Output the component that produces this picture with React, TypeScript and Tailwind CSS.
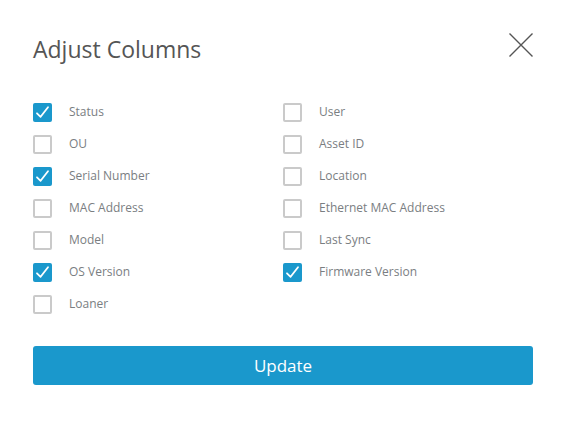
import React, { useState } from "react";

type Col = { label: string; checked: boolean };

const left: Col[] = [
  { label: "Status", checked: true },
  { label: "OU", checked: false },
  { label: "Serial Number", checked: true },
  { label: "MAC Address", checked: false },
  { label: "Model", checked: false },
  { label: "OS Version", checked: true },
  { label: "Loaner", checked: false },
];

const right: Col[] = [
  { label: "User", checked: false },
  { label: "Asset ID", checked: false },
  { label: "Location", checked: false },
  { label: "Ethernet MAC Address", checked: false },
  { label: "Last Sync", checked: false },
  { label: "Firmware Version", checked: true },
];

function Box({ checked }: { checked: boolean }) {
  if (checked) {
    return (
      <span className="flex h-[19px] w-[19px] items-center justify-center rounded-[2px] bg-[#1a98cc]">
        <svg width="15" height="15" viewBox="0 0 15 15" fill="none">
          <path d="M2 8.3 L5.6 11.8 L13 2.2" stroke="#fff" strokeWidth="1.8" strokeLinecap="round" strokeLinejoin="round" />
        </svg>
      </span>
    );
  }
  return <span className="block h-[19px] w-[19px] rounded-[2px] border-2 border-[#cacaca] bg-white" />;
}

function Row({ col }: { col: Col }) {
  const [on, setOn] = useState(col.checked);
  return (
    <label className="flex h-8 cursor-pointer items-center" onClick={() => setOn(!on)}>
      <span className="w-9">
        <Box checked={on} />
      </span>
      <span className="text-[12px] text-[#7a7e82]">{col.label}</span>
    </label>
  );
}

export default function App() {
  return (
    <div
      className="h-[448px] w-[566px] bg-white px-[33px] pt-[34px]"
      style={{ fontFamily: '"Open Sans", "Liberation Sans", sans-serif' }}
    >
      <div className="flex items-start justify-between">
        <h1 className="text-[23px] leading-[30px] text-[#555]">Adjust Columns</h1>
        <button className="-mt-[1px] h-6 w-6">
          <svg width="24" height="24" viewBox="0 0 24 24" fill="none">
            <path d="M0.5 0.5 L23.5 23.5 M23.5 0.5 L0.5 23.5" stroke="#555" strokeWidth="1.4" />
          </svg>
        </button>
      </div>
      <div className="mt-8 grid grid-cols-2">
        <div className="flex flex-col">
          {left.map((c) => (
            <Row key={c.label} col={c} />
          ))}
        </div>
        <div className="flex flex-col">
          {right.map((c) => (
            <Row key={c.label} col={c} />
          ))}
        </div>
      </div>
      <button className="mt-[26px] flex h-[39px] w-full items-center justify-center rounded-[3px] bg-[#1a98cc] text-[17px] text-white">
        Update
      </button>
    </div>
  );
}
